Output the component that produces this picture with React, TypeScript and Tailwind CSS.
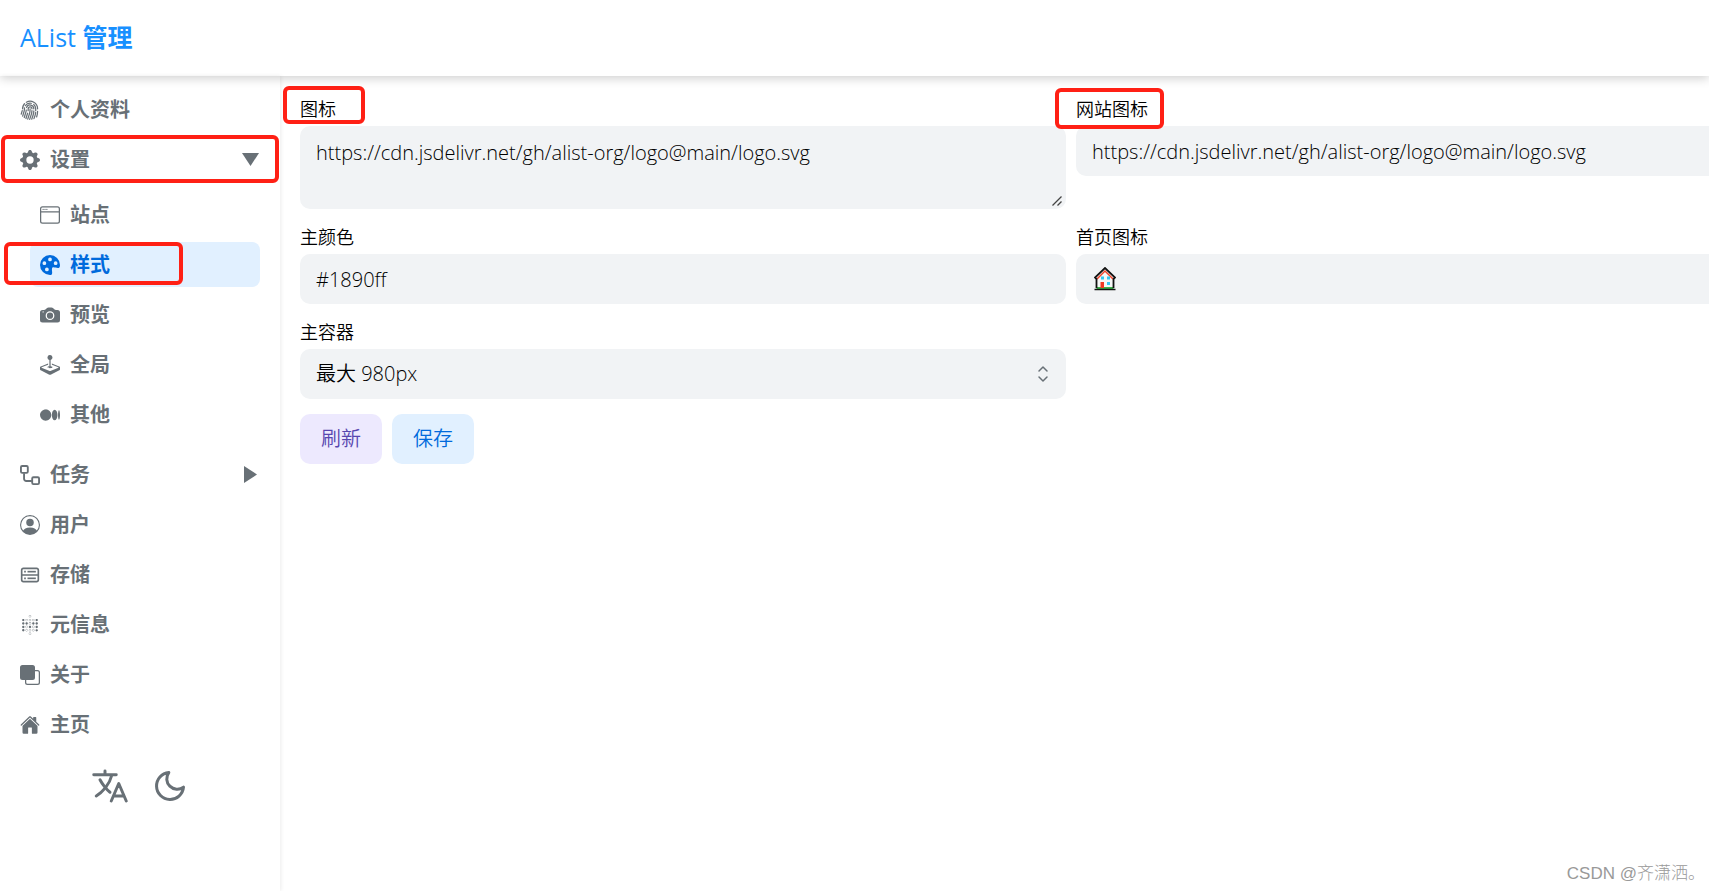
import React from 'react';
import {
  BsCameraFill,
  BsFingerprint,
  BsFront,
  BsGearFill,
  BsJoystick,
  BsMedium,
  BsPaletteFill,
  BsPersonCircle,
  BsWindow,
} from 'react-icons/bs';
import { CgDatabase } from 'react-icons/cg';
import { FiMoon } from 'react-icons/fi';
import { IoHome, IoLanguageOutline } from 'react-icons/io5';
import { SiMetabase } from 'react-icons/si';

interface MenuItem {
  title: string;
  icon: React.ComponentType<{ className?: string }>;
  active?: boolean;
  marked?: string;
  children?: MenuItem[];
  open?: boolean;
}

const Workflow: React.FC<{ className?: string }> = ({ className }) => (
  <svg viewBox="0 0 16 16" className={className} fill="none" stroke="currentColor" strokeWidth="1.5" aria-hidden="true">
    <rect x=".75" y=".75" width="5.5" height="5.5" rx="1" />
    <rect x="9.75" y="9.75" width="5.5" height="5.5" rx="1" />
    <path d="M3.25 6.500v4.500A1.750 1.750 0 0 0 5 12.750h4.500" />
  </svg>
);

const menu: MenuItem[] = [
  { title: '个人资料', icon: BsFingerprint },
  {
    title: '设置',
    icon: BsGearFill,
    open: true,
    marked: '-left-[9px] -right-[9px] -top-[2px] -bottom-[1px]',
    children: [
      { title: '站点', icon: BsWindow },
      { title: '样式', icon: BsPaletteFill, active: true, marked: '-left-[26px] right-[77px] top-0 bottom-[2px]' },
      { title: '预览', icon: BsCameraFill },
      { title: '全局', icon: BsJoystick },
      { title: '其他', icon: BsMedium },
    ],
  },
  { title: '任务', icon: Workflow, children: [] },
  { title: '用户', icon: BsPersonCircle },
  { title: '存储', icon: CgDatabase },
  { title: '元信息', icon: SiMetabase },
  { title: '关于', icon: BsFront },
  { title: '主页', icon: IoHome },
];

const Marker: React.FC<{ className: string }> = ({ className }) => (
  <span className={`pointer-events-none absolute rounded-md border-4 border-[#ff2015] ${className}`} />
);

const Arrow: React.FC<{ open?: boolean }> = ({ open }) => (
  <svg viewBox="0 0 18 18" className="h-[18px] w-[18px]" fill="currentColor" aria-hidden="true">
    {open ? <path d="M0 2h17L8.500 15z" /> : <path d="M2 0v17l13-8.500z" />}
  </svg>
);

const SideItem: React.FC<{ item: MenuItem }> = ({ item }) => {
  const Icon = item.icon;
  return (
    <li>
      <a
        href="#"
        className={`relative flex h-[45px] items-center gap-[10px] rounded-lg px-[10px] text-[20px] font-bold ${
          item.active ? 'bg-[#e1f0ff] text-[#006adc]' : 'text-[#687076]'
        }`}
      >
        <Icon className="h-5 w-5 shrink-0" />
        <span className="flex-1">{item.title}</span>
        {item.children && <Arrow open={item.open} />}
        {item.marked && <Marker className={item.marked} />}
      </a>
      {item.open && (
        <ul className="my-[10px] ml-5 mr-[10px] flex flex-col gap-[5px]">
          {item.children?.map(child => <SideItem key={child.title} item={child} />)}
        </ul>
      )}
    </li>
  );
};

const House = () => (
  <svg viewBox="0 0 22 24" className="h-6 w-[22px] shrink-0" aria-hidden="true">
    <path d="M2.5 11 11 2.5l8.500 8.500V22h-17z" fill="#f7f7f7" />
    <path d="M3 12 11 4l8 8" fill="none" stroke="#f0452d" strokeWidth="1.5" />
    <path d="M2.500 21h17" stroke="#3bb44a" strokeWidth="2" />
    <path d="M2.500 21v-9L1 10.500 11 1l10 9.500-1.500 1.500v9" fill="none" stroke="#111" strokeWidth="1.800" />
    <path d="M.5 22.500h21" stroke="#111" strokeWidth="1.500" />
    <path d="M7 9.500h3v3H7zM13 9.500h3v3h-3zM13 15h3v3h-3z" fill="#35c9f5" />
    <path d="M6.500 15h3.500v6H6.500z" fill="#f03a24" />
  </svg>
);

interface FieldProps {
  id: string;
  label: string;
  marked?: string;
  children: React.ReactNode;
}

const Field: React.FC<FieldProps> = ({ id, label, marked, children }) => (
  <div className="flex flex-col gap-1">
    <label htmlFor={id} className="relative self-start text-[18px] leading-[26px]">
      {label}
      {marked && <Marker className={marked} />}
    </label>
    {children}
  </div>
);

const inputClass = 'h-[50px] w-full rounded-[10px] bg-[#f1f3f5] px-4 text-[20px] outline-none';

const App = () => (
  <div className="relative flex min-h-screen flex-col overflow-hidden bg-white font-['Open_Sans','Noto_Sans_CJK_SC',sans-serif] text-[#11181c]">
    <header className="relative z-10 flex h-[76px] items-center px-5 shadow-[0_2px_10px_rgba(0,0,0,0.2)]">
      <h1 className="text-[25px] font-medium text-[#1890ff]">
        AList <span className="font-bold">管理</span>
      </h1>
    </header>

    <div className="flex flex-1">
      <nav className="w-[280px] shrink-0 p-[10px] pt-[11px] shadow-[1px_0_4px_rgba(0,0,0,0.08)]">
        <ul className="flex flex-col gap-[5px]">
          {menu.map(item => <SideItem key={item.title} item={item} />)}
        </ul>
        <div className="mt-[19px] flex items-center justify-center gap-[22px] pr-[2px] text-[#687076]">
          <button type="button" aria-label="Language">
            <IoLanguageOutline className="h-10 w-10 [&_path]:[stroke-width:38px]" />
          </button>
          <button type="button" aria-label="Dark mode">
            <FiMoon className="h-9 w-9" />
          </button>
        </div>
      </nav>

      <main className="min-w-0 flex-1 p-5 font-[340] text-black">
        <div className="grid grid-cols-[repeat(2,minmax(766px,1fr))] gap-x-[10px] gap-y-[15px]">
          <Field id="logo" label="图标" marked="-left-[17px] -right-[29px] -top-[10px] -bottom-[2px]">
            <div className="relative">
              <textarea
                id="logo"
                className="block h-[83px] w-full resize-y rounded-[10px] bg-[#f1f3f5] px-4 py-3 text-[20px] leading-[30px] outline-none [&::-webkit-resizer]:hidden"
                defaultValue="https://cdn.jsdelivr.net/gh/alist-org/logo@main/logo.svg"
              />
              <svg
                viewBox="0 0 10 10"
                className="pointer-events-none absolute bottom-[3px] right-1 h-[10px] w-[10px]"
                stroke="#444"
                strokeWidth="1.3"
                aria-hidden="true"
              >
                <path d="M.5 9.500l9-9M5.500 9.500l4-4" />
              </svg>
            </div>
          </Field>
          <Field id="favicon" label="网站图标" marked="-left-[21px] -right-[16px] -top-[8px] -bottom-[7px]">
            <input
              id="favicon"
              className={inputClass}
              defaultValue="https://cdn.jsdelivr.net/gh/alist-org/logo@main/logo.svg"
            />
          </Field>
          <Field id="main-color" label="主颜色">
            <input id="main-color" className={inputClass} defaultValue="#1890ff" />
          </Field>
          <Field id="home-icon" label="首页图标">
            <div className="flex h-[50px] items-center rounded-[10px] bg-[#f1f3f5] px-[18px]">
              <House />
              <input id="home-icon" className="h-full flex-1 text-[20px] outline-none" />
            </div>
          </Field>
          <Field id="container" label="主容器">
            <div className="relative">
              <select id="container" className={`${inputClass} appearance-none`}>
                <option>最大 980px</option>
              </select>
              <svg
                viewBox="0 0 12 18"
                className="pointer-events-none absolute right-[17px] top-4 h-[18px] w-3"
                fill="none"
                stroke="#687076"
                strokeWidth="1.5"
                strokeLinecap="round"
                strokeLinejoin="round"
                aria-hidden="true"
              >
                <path d="m2 6 4-4 4 4M2 12l4 4 4-4" />
              </svg>
            </div>
          </Field>
        </div>
        <div className="mt-[15px] flex gap-[10px] text-[20px]">
          <button type="button" className="h-[50px] rounded-[10px] bg-[#ede9fe] px-[21px] text-[#5746af]">
            刷新
          </button>
          <button type="button" className="h-[50px] rounded-[10px] bg-[#e1f0ff] px-[21px] text-[#006adc]">
            保存
          </button>
        </div>
      </main>
    </div>

    <p className="absolute bottom-[5px] right-1 font-['Liberation_Sans','Noto_Sans_CJK_SC',sans-serif] text-[17px] font-light text-[#999]">
      CSDN @齐潇洒。
    </p>
  </div>
);

export default App;
